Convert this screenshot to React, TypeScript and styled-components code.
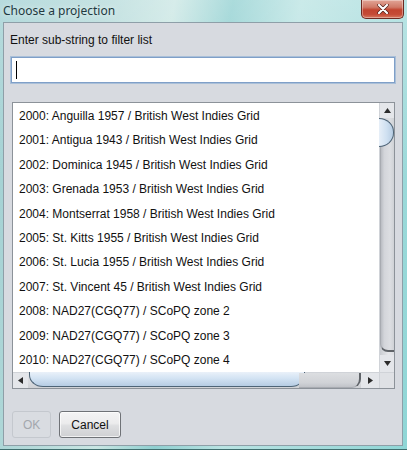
import React from "react";
import styled, { createGlobalStyle } from "styled-components";

const Global = createGlobalStyle`
  html, body { margin: 0; padding: 0; background: #ffffff; }
  body { font-family: "Liberation Sans", Arial, sans-serif; }
  * { box-sizing: border-box; }
`;

const Window = styled.div`
  width: 407px;
  height: 450px;
  display: flex;
  flex-direction: column;
  padding: 0 4px 3px 3px;
  background:
    linear-gradient(180deg, rgba(255,255,255,0.25) 0%, rgba(255,255,255,0) 40%),
    linear-gradient(100deg, #9fcfd2 0%, #b3d9d9 22%, #c9e6e3 36%, #8fcfd0 48%, #b9e3e2 62%, #a6dcdc 80%, #8fd6d6 100%);
  border-bottom: 1px solid #3f6e6e;
`;

const TitleBar = styled.div`
  height: 22px;
  display: flex;
  align-items: flex-start;
  justify-content: space-between;
`;

const Title = styled.span`
  font-family: "Noto Sans", "Open Sans", sans-serif;
  font-size: 12px;
  line-height: 22px;
  color: #22393f;
  padding-left: 0;
  text-shadow: 0 0 6px rgba(255,255,255,0.8);
`;

const CloseButton = styled.div`
  width: 43px;
  height: 19px;
  margin-right: -1px;
  border: 1px solid #6e2a22;
  border-top: none;
  border-radius: 0 0 5px 5px;
  background: linear-gradient(180deg, #e2a597 0%, #d07a68 40%, #c2442f 55%, #c54b36 80%, #d7785f 100%);
  box-shadow: inset 0 0 0 1px rgba(255,255,255,0.35);
  display: flex;
  align-items: center;
  justify-content: center;
`;

const Content = styled.div`
  flex: 1;
  display: flex;
  flex-direction: column;
  background: #d7dae0;
  border: 1px solid #8e9fa8;
  padding: 10px 6px 0 6px;
`;

const Label = styled.div`
  font-size: 12px;
  line-height: 15px;
  color: #111;
  height: 15px;
`;

const TextField = styled.div`
  margin-top: 8px;
  height: 28px;
  background: #ffffff;
  border: 1px solid #a9bfd8;
  box-shadow: inset 0 0 0 1px #7f9fc8;
  display: flex;
  align-items: center;
  padding-left: 5px;
`;

const Caret = styled.div`
  width: 1px;
  height: 18px;
  background: #000;
`;

const ScrollPane = styled.div`
  margin: 18px 1px 0 2px;
  height: 287px;
  border: 1px solid #8c9299;
  display: grid;
  grid-template-columns: 1fr 15px;
  grid-template-rows: 1fr 16px;
  background: #ffffff;
  overflow: hidden;
`;

const Viewport = styled.div`
  overflow: hidden;
  padding-top: 1px;
  background: #ffffff;
`;

const Row = styled.div`
  height: 24.4px;
  line-height: 24.4px;
  padding-left: 6px;
  font-size: 12px;
  color: #111;
  white-space: nowrap;
`;

const VBar = styled.div`
  display: flex;
  flex-direction: column;
  background: linear-gradient(90deg, #c9ccd1 0%, #e6e7ea 60%, #dcdee2 100%);
  border-left: 1px solid #d0d3d8;
`;

const ArrowBox = styled.div<{ $w?: number; $h?: number }>`
  width: ${(p) => (p.$w ? `${p.$w}px` : "100%")};
  height: ${(p) => (p.$h ? `${p.$h}px` : "100%")};
  flex: none;
  display: flex;
  align-items: center;
  justify-content: center;
  background: #e4e6ea;
`;

const VThumb = styled.div`
  flex: 1;
  margin: 0 0 3px 0;
  display: flex;
  flex-direction: column;
  background: linear-gradient(90deg, #b9bcc2 0%, #d3d5da 25%, #dcdee2 70%, #cfd2d6 100%);
  border-radius: 0 0 0 8px;
  border-bottom: 2px solid #5f6368;
  border-left: 1px solid #a8abb1;
`;

const VCap = styled.div`
  height: 29px;
  margin-left: -2px;
  border: 1px solid #4e6477;
  border-left: none;
  border-radius: 0 15px 15px 0 / 0 14px 14px 0;
  background: linear-gradient(90deg, #e7eff8 0%, #cfe0f1 55%, #b7cde3 100%);
`;

const HBar = styled.div`
  display: flex;
  background: linear-gradient(180deg, #e4e6ea 0%, #d9dbdf 60%, #cfd1d5 100%);
  border-top: 1px solid #d0d3d8;
`;

const HThumb = styled.div`
  flex: 1;
  display: flex;
  margin-left: 1px;
`;

const HBlue = styled.div`
  width: 276px;
  height: 15px;
  margin-top: -1px;
  border: 1px solid #4e6477;
  border-top: none;
  border-radius: 0 0 14px 14px / 0 0 12px 12px;
  background: linear-gradient(180deg, #eaf1f9 0%, #d3e3f3 45%, #b6cce3 100%);
`;

const HGray = styled.div`
  flex: 1;
  height: 15px;
  margin-left: -6px;
  border-right: 2px solid #5f6368;
  border-bottom: 1px solid #a8abb1;
  border-radius: 0 0 9px 0;
  background: linear-gradient(180deg, #dcdee1 0%, #d0d2d6 70%, #c0c3c8 100%);
`;

const Corner = styled.div`
  background: #dfe1e5;
  border-top: 1px solid #d0d3d8;
  border-left: 1px solid #d0d3d8;
`;

const ButtonRow = styled.div`
  margin-top: 22px;
  margin-left: 2px;
  display: flex;
  gap: 8px;
`;

const Button = styled.div<{ $disabled?: boolean }>`
  height: 27px;
  padding: 0 ${(p) => (p.$disabled ? 10 : 11)}px;
  min-width: ${(p) => (p.$disabled ? 39 : 60)}px;
  display: flex;
  align-items: center;
  justify-content: center;
  font-size: 12px;
  border-radius: 3px;
  color: ${(p) => (p.$disabled ? "#a3a7ad" : "#111")};
  border: 1px solid ${(p) => (p.$disabled ? "#c4c8ce" : "#6f7277")};
  background: ${(p) =>
    p.$disabled
      ? "#d9dce1"
      : "linear-gradient(180deg, #f4f4f5 0%, #ececed 45%, #dedfe1 55%, #cfd0d3 100%)"};
  box-shadow: ${(p) => (p.$disabled ? "none" : "inset 0 0 0 1px rgba(255,255,255,0.7)")};
`;

const Arrow = ({ dir }: { dir: "up" | "down" | "left" | "right" }) => {
  const pts = {
    up: "0,6 7,6 3.5,1",
    down: "0,1 7,1 3.5,6",
    left: "6,0 6,7 1,3.5",
    right: "1,0 1,7 6,3.5",
  }[dir];
  return (
    <svg width="7" height="7" viewBox="0 0 7 7">
      <polygon points={pts} fill="#2b2b2b" />
    </svg>
  );
};

const items = [
  "2000: Anguilla 1957 / British West Indies Grid",
  "2001: Antigua 1943 / British West Indies Grid",
  "2002: Dominica 1945 / British West Indies Grid",
  "2003: Grenada 1953 / British West Indies Grid",
  "2004: Montserrat 1958 / British West Indies Grid",
  "2005: St. Kitts 1955 / British West Indies Grid",
  "2006: St. Lucia 1955 / British West Indies Grid",
  "2007: St. Vincent 45 / British West Indies Grid",
  "2008: NAD27(CGQ77) / SCoPQ zone 2",
  "2009: NAD27(CGQ77) / SCoPQ zone 3",
  "2010: NAD27(CGQ77) / SCoPQ zone 4",
];

export default function App() {
  return (
    <>
      <Global />
      <Window>
        <TitleBar>
          <Title>Choose a projection</Title>
          <CloseButton>
            <svg width="12" height="10" viewBox="0 0 12 10">
              <path d="M2 1 L10 9 M10 1 L2 9" stroke="#4a1a14" strokeWidth="3.4" strokeLinecap="round" />
              <path d="M2 1 L10 9 M10 1 L2 9" stroke="#ffffff" strokeWidth="2.2" strokeLinecap="round" />
            </svg>
          </CloseButton>
        </TitleBar>
        <Content>
          <Label>Enter sub-string to filter list</Label>
          <TextField>
            <Caret />
          </TextField>
          <ScrollPane>
            <Viewport>
              {items.map((t) => (
                <Row key={t}>{t}</Row>
              ))}
            </Viewport>
            <VBar>
              <ArrowBox $h={15}>
                <Arrow dir="up" />
              </ArrowBox>
              <VThumb>
                <VCap />
              </VThumb>
              <ArrowBox $h={17}>
                <Arrow dir="down" />
              </ArrowBox>
            </VBar>
            <HBar>
              <ArrowBox $w={15}>
                <Arrow dir="left" />
              </ArrowBox>
              <HThumb>
                <HBlue />
                <HGray />
              </HThumb>
              <ArrowBox $w={18}>
                <Arrow dir="right" />
              </ArrowBox>
            </HBar>
            <Corner />
          </ScrollPane>
          <ButtonRow>
            <Button $disabled>OK</Button>
            <Button>Cancel</Button>
          </ButtonRow>
        </Content>
      </Window>
    </>
  );
}
